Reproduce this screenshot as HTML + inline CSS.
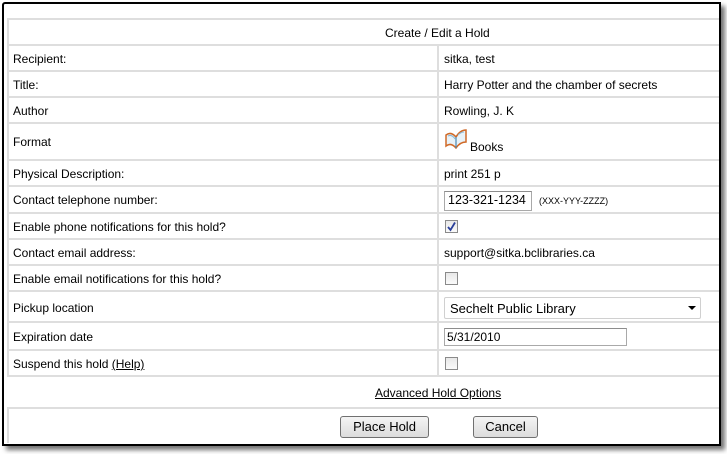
<!DOCTYPE html>
<html><head><style>
body{margin:0;width:727px;height:454px;background:#fff;font-family:"Liberation Sans",Arial,sans-serif;font-size:12px;color:#000;position:relative;overflow:hidden}
.win{position:absolute;left:2px;top:2px;width:715px;height:440px;border:2px solid #000;border-radius:3px 0 0 0;box-shadow:4px 4px 5px rgba(0,0,0,.55);background:#fff}
.h{position:absolute;left:7px;width:712px;height:0;border-top:2px solid #dedede}
.v{position:absolute;width:0;border-left:2px solid #dedede}
.t{position:absolute;white-space:nowrap}
.cb{position:absolute;left:445px;width:11px;height:11px;border:1px solid #8a8a8a;background:linear-gradient(#e8e8e8,#fafafa)}
.inp{position:absolute;border:1px solid #a9a9a9;border-top-color:#8d8d8d;background:#fff}
.btn{position:absolute;top:416px;height:20px;border:1px solid #707070;border-radius:3px;background:linear-gradient(#f4f4f4,#dcdcdc);font-size:13px;text-align:center;line-height:20px}
u{text-decoration:underline}
</style></head><body>
<div class="win"></div>
<div class="h" style="top:18px"></div>
<div class="h" style="top:44px"></div>
<div class="h" style="top:70px"></div>
<div class="h" style="top:96px"></div>
<div class="h" style="top:122px"></div>
<div class="h" style="top:159px"></div>
<div class="h" style="top:185px"></div>
<div class="h" style="top:212px"></div>
<div class="h" style="top:238px"></div>
<div class="h" style="top:264px"></div>
<div class="h" style="top:290px"></div>
<div class="h" style="top:321px"></div>
<div class="h" style="top:349px"></div>
<div class="h" style="top:375px"></div>
<div class="h" style="top:407px"></div>
<div class="v" style="left:7px;top:18px;height:359px"></div>
<div class="v" style="left:437px;top:44px;height:333px"></div>
<div class="v" style="left:7px;top:407px;height:36px"></div>

<div class="t" style="left:385px;top:26px">Create / Edit a Hold</div>
<div class="t" style="left:13px;top:52px">Recipient:</div><div class="t" style="left:444px;top:52px">sitka, test</div>
<div class="t" style="left:13px;top:78px">Title:</div><div class="t" style="left:444px;top:78px">Harry Potter and the chamber of secrets</div>
<div class="t" style="left:13px;top:104px">Author</div><div class="t" style="left:444px;top:104px">Rowling, J. K</div>
<div class="t" style="left:13px;top:135px">Format</div>
<svg style="position:absolute;left:444px;top:127px" width="24" height="22" viewBox="0 0 24 22"><path d="M2 8 Q7 4 12 10 Q16 3 22 3 L22 15 Q16 15 12 21 Q7 15 2 19Z" fill="#e8f2f8" stroke="#d06a28" stroke-width="1.5"/><path d="M12 10 L12 21" stroke="#4a88b0" stroke-width="1.2"/><path d="M4 9 Q8 7 11 12 M14 8 Q17 5 20 5" stroke="#8cb8d4" fill="none"/></svg>
<div class="t" style="left:470px;top:140px">Books</div>
<div class="t" style="left:13px;top:167px">Physical Description:</div><div class="t" style="left:444px;top:167px">print 251 p</div>
<div class="t" style="left:13px;top:193px">Contact telephone number:</div>
<div class="inp" style="left:444px;top:191px;width:86px;height:18px"><span class="t" style="left:3px;top:1px;font-size:12.5px">123-321-1234</span></div>
<div class="t" style="left:539px;top:196px;font-size:9px">(XXX-YYY-ZZZZ)</div>
<div class="t" style="left:13px;top:220px">Enable phone notifications for this hold?</div>
<div class="cb" style="top:220px"><svg width="11" height="11" style="position:absolute;left:0;top:0"><path d="M2 6 L4.5 9 L9 1.5" stroke="#2a3f9a" stroke-width="1.8" fill="none"/></svg></div>
<div class="t" style="left:13px;top:246px">Contact email address:</div><div class="t" style="left:444px;top:246px">support@sitka.bclibraries.ca</div>
<div class="t" style="left:13px;top:272px">Enable email notifications for this hold?</div>
<div class="cb" style="top:272px"></div>
<div class="t" style="left:13px;top:301px">Pickup location</div>
<div class="inp" style="left:444px;top:297px;width:255px;height:20px;border-color:#d0d0d0;border-radius:2px"><span class="t" style="left:5px;top:3px;font-size:13px">Sechelt Public Library</span><svg style="position:absolute;right:4px;top:8px" width="8" height="5"><path d="M0 0H8L4 4Z" fill="#000"/></svg></div>
<div class="t" style="left:13px;top:330px">Expiration date</div>
<div class="inp" style="left:444px;top:328px;width:181px;height:16px"><span class="t" style="left:2px;top:1px">5/31/2010</span></div>
<div class="t" style="left:13px;top:357px">Suspend this hold <u>(Help)</u></div>
<div class="cb" style="top:357px"></div>
<div class="t" style="left:375px;top:386px"><u>Advanced Hold Options</u></div>
<div class="btn" style="left:340px;width:87px">Place Hold</div>
<div class="btn" style="left:473px;width:63px">Cancel</div>
</body></html>
